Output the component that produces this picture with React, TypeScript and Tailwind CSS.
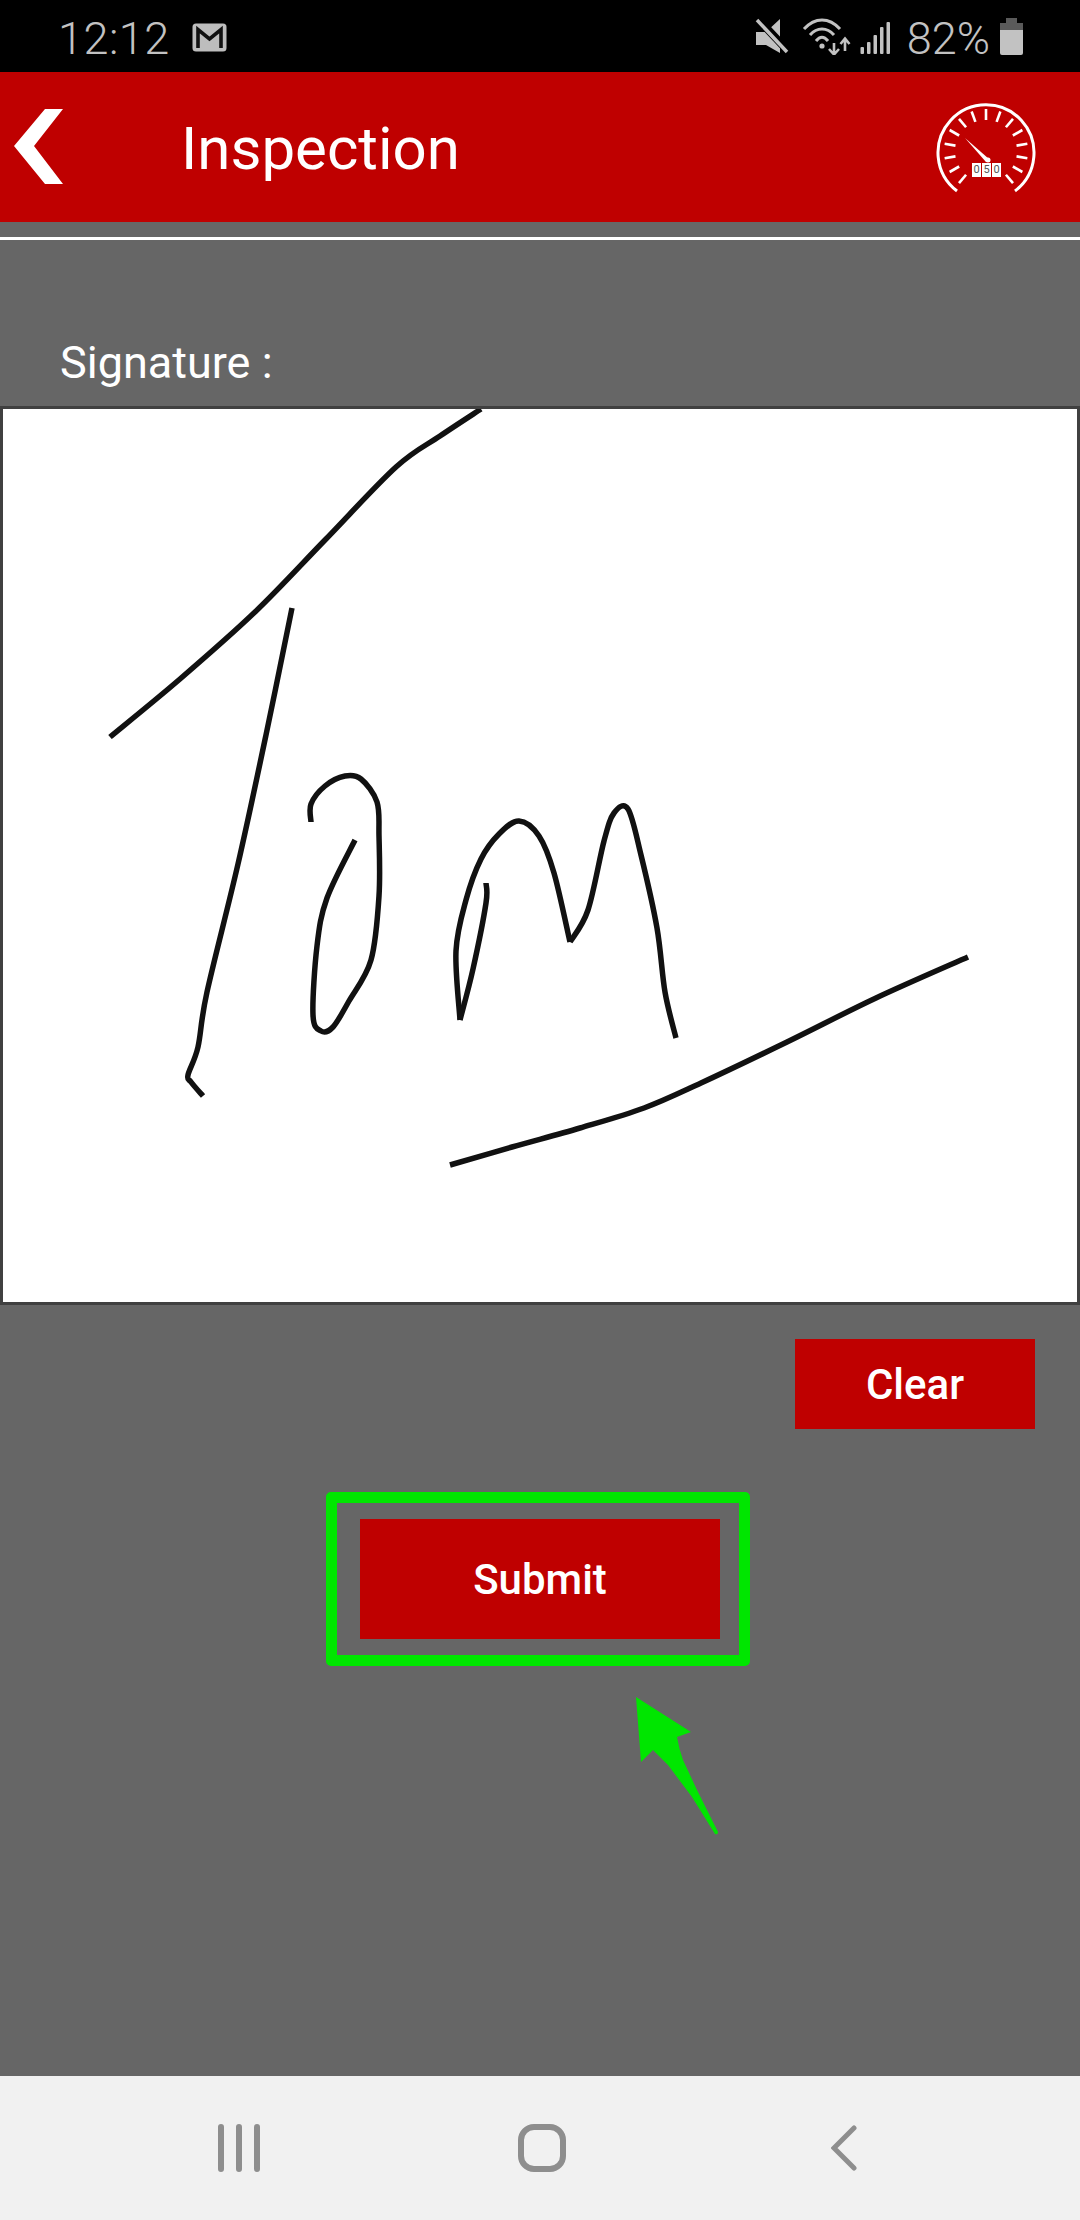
const roboto = { fontFamily: "Roboto, sans-serif" };

type P = [number, number];

function smooth(pts: P[]) {
  let d = `M${pts[0][0]} ${pts[0][1]}`;
  for (let i = 0; i < pts.length - 1; i++) {
    const p0 = pts[Math.max(i - 1, 0)];
    const p1 = pts[i];
    const p2 = pts[i + 1];
    const p3 = pts[Math.min(i + 2, pts.length - 1)];
    const c1x = p1[0] + (p2[0] - p0[0]) / 6;
    const c1y = p1[1] + (p2[1] - p0[1]) / 6;
    const c2x = p2[0] - (p3[0] - p1[0]) / 6;
    const c2y = p2[1] - (p3[1] - p1[1]) / 6;
    d += ` C${c1x} ${c1y} ${c2x} ${c2y} ${p2[0]} ${p2[1]}`;
  }
  return d;
}

const strokes: P[][] = [
  [[110, 737], [180, 679], [255, 612], [325, 540], [396, 467], [440, 436], [481, 409]],
  [[292, 608], [266, 735], [238, 864], [207, 992], [198, 1047], [188, 1075], [191, 1082], [203, 1096]],
  [[311, 822], [311, 804], [325, 786], [345, 776], [361, 779], [377, 802], [379, 836], [379, 896], [371, 960], [349, 1001], [333, 1027], [321, 1031], [313, 1015], [317, 946], [327, 898], [355, 840]],
  [[486, 883], [486, 903], [473, 969], [460, 1020]],
  [[460, 1020], [456, 951], [466, 900], [481, 859], [499, 834], [519, 821], [539, 836], [554, 873], [570, 942]],
  [[570, 942], [588, 910], [604, 841], [614, 813], [628, 809], [641, 855], [657, 928], [665, 992], [676, 1038]],
  [[450, 1165], [512, 1147], [580, 1128], [644, 1108], [701, 1083], [787, 1042], [876, 998], [968, 957]],
];

function Gauge() {
  const angles = [-140, -120, -100, -80, -60, -40, -20, 0, 20, 40, 60, 80, 100, 120, 140];
  return (
    <div className="relative w-[100px] h-[92px]">
      <svg width="100" height="92" viewBox="0 0 100 92" className="block">
        <path d="M21 89 A48 48 0 1 1 79 89" fill="none" stroke="#fff" strokeWidth="3" />
        {angles.map((a) => {
          const r = (a * Math.PI) / 180;
          return (
            <line
              key={a}
              x1={50 + 31 * Math.sin(r)}
              y1={49 - 31 * Math.cos(r)}
              x2={50 + 42 * Math.sin(r)}
              y2={49 - 42 * Math.cos(r)}
              stroke="#fff"
              strokeWidth="2.6"
            />
          );
        })}
        <polygon points="29,36 53,57 50,60" fill="#fff" />
        <circle cx="52" cy="58" r="2.5" fill="#fff" />
      </svg>
      <div className="absolute left-[36px] top-[61px] flex gap-[1px]">
        {["0", "5", "0"].map((d, i) => (
          <span key={i} className="w-[9px] h-[14px] bg-white text-[#555] text-[11px] leading-[14px] text-center" style={roboto}>
            {d}
          </span>
        ))}
      </div>
    </div>
  );
}

function StatusBar() {
  return (
    <div className="h-[72px] bg-black flex items-center text-[#c2c2c2] text-[45px] leading-none shrink-0" style={roboto}>
      <span className="ml-[58px] mt-[4px] font-light tracking-[0.5px]">12:12</span>
      <svg className="ml-[22px] mt-[2px]" width="35" height="29" viewBox="0 0 35 29">
        <rect x="0.5" y="0.5" width="34" height="28" rx="3.5" fill="#bdbdbd" />
        <path d="M6 25 V6.5 L17.5 16 L29 6.5 V25" fill="none" stroke="#111" strokeWidth="3.6" />
      </svg>
      <div className="ml-auto flex items-center mr-[56px]">
        <svg width="36" height="37" viewBox="0 0 36 37">
          <path d="M1 14 H11 L25 1 V35 L11 27 H1 Z" fill="#c2c2c2" />
          <path d="M2 0 L34 34" stroke="#000" strokeWidth="8" />
          <path d="M2 2 L32 34" stroke="#c2c2c2" strokeWidth="3.5" />
        </svg>
        <svg className="ml-[11px]" width="50" height="37" viewBox="0 0 50 37">
          <path d="M2 11 C13 -1 27 -1 38 11" fill="none" stroke="#c2c2c2" strokeWidth="3" />
          <path d="M8 17 C15 9 25 9 32 17" fill="none" stroke="#c2c2c2" strokeWidth="3" />
          <path d="M14 23 C18 18 22 18 26 23" fill="none" stroke="#c2c2c2" strokeWidth="3" />
          <circle cx="20" cy="28" r="2.6" fill="#c2c2c2" />
          <path d="M32 25 V36 M27 31 L32 36.5 L37 31" fill="none" stroke="#c2c2c2" strokeWidth="2.6" />
          <path d="M43 33 V21 M38.5 26 L43 20.5 L47.5 26" fill="none" stroke="#c2c2c2" strokeWidth="2.6" />
        </svg>
        <svg className="ml-[7px]" width="33" height="37" viewBox="0 0 33 37">
          <rect x="1.5" y="29" width="3.5" height="7" rx="1" fill="#c2c2c2" />
          <rect x="8" y="24" width="3.5" height="12" rx="1" fill="#c2c2c2" />
          <rect x="14.5" y="17" width="3.5" height="19" rx="1" fill="#c2c2c2" />
          <rect x="21" y="9" width="3.5" height="27" rx="1" fill="#c2c2c2" />
          <rect x="27.5" y="4" width="3.5" height="32" rx="1" fill="#c2c2c2" />
        </svg>
        <span className="ml-[15px] mt-[4px] font-light">82%</span>
        <svg className="ml-[9px]" width="25" height="37" viewBox="0 0 25 37">
          <rect x="7" y="0" width="11" height="5" fill="#5a5a5a" />
          <path d="M1 5 H24 V12 H1 Z" fill="#5a5a5a" />
          <path d="M1 12 H24 V35 A2 2 0 0 1 22 37 H3 A2 2 0 0 1 1 35 Z" fill="#c2c2c2" />
        </svg>
      </div>
    </div>
  );
}

function Signature() {
  return (
    <svg viewBox="3 409 1074 893" className="block w-full h-full" fill="none" stroke="#111" strokeWidth="5.5" strokeLinejoin="round">
      {strokes.map((s, i) => (
        <path key={i} d={smooth(s)} />
      ))}
    </svg>
  );
}

export default function App() {
  return (
    <div className="w-[1080px] h-[2220px] flex flex-col overflow-hidden" style={roboto}>
      <StatusBar />
      <header className="h-[150px] bg-[#bf0000] flex items-center shrink-0 relative">
        <svg className="ml-[14px]" width="50" height="76" viewBox="0 0 50 76">
          <polygon points="0,37 31,0 49,0 20,37 49,75 31,75" fill="#fff" />
        </svg>
        <h1 className="ml-[117px] mt-[4px] text-white text-[60px] leading-none font-normal">Inspection</h1>
        <div className="ml-auto mr-[44px] mt-[2px]">
          <Gauge />
        </div>
      </header>
      <main className="flex-1 bg-[#666666] flex flex-col pt-[15px]">
        <div className="h-[3px] bg-white shrink-0" />
        <div className="mt-[98px] ml-[60px] text-white text-[45px] leading-[50px]">Signature :</div>
        <div className="mt-[18px] h-[899px] border-[3px] border-[#404040] bg-white shrink-0">
          <Signature />
        </div>
        <div className="flex justify-end pr-[45px] mt-[34px]">
          <button className="w-[240px] h-[90px] bg-[#bf0000] text-white text-[42px] font-medium">Clear</button>
        </div>
        <div className="mt-[63px] ml-[326px] w-[424px] h-[174px] border-[11px] border-[#00e600] rounded-[5px] pl-[23px] pt-[16px]">
          <button className="w-[360px] h-[120px] bg-[#bf0000] text-white text-[42px] font-medium block">Submit</button>
        </div>
        <svg className="mt-[28px] ml-[635px] block" width="90" height="142" viewBox="635 1694 90 142">
          <path d="M636 1697 L691 1732 L677 1737 Q679 1749 683 1760 L697 1790 L718 1832 Q718 1835 715 1834 L692 1797 L668 1765 L653 1750 L641 1762 Z" fill="#00e600" />
        </svg>
      </main>
      <nav className="h-[144px] bg-[#f1f1f1] shrink-0 relative flex items-center">
        <svg className="ml-[217px]" width="44" height="48" viewBox="0 0 44 48">
          <path d="M4 3 V45 M22 3 V45 M40 3 V45" stroke="#8e8e8e" strokeWidth="6" strokeLinecap="round" />
        </svg>
        <svg className="ml-[257px]" width="48" height="48" viewBox="0 0 48 48">
          <rect x="3" y="3" width="42" height="42" rx="13" fill="none" stroke="#8e8e8e" strokeWidth="6" />
        </svg>
        <svg className="ml-[265px]" width="26" height="46" viewBox="0 0 26 46">
          <path d="M23 3 L3 23 L23 43" fill="none" stroke="#8e8e8e" strokeWidth="5" strokeLinecap="round" />
        </svg>
      </nav>
    </div>
  );
}
